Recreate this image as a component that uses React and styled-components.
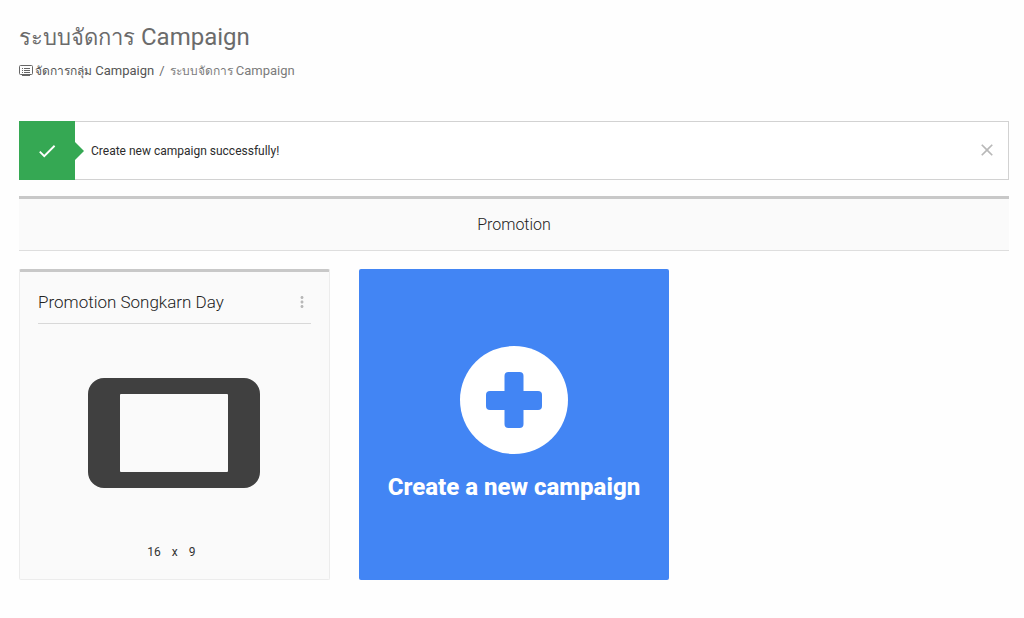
import React from "react"
import styled, { createGlobalStyle } from "styled-components"
import { MdCheck, MdClose, MdMoreVert } from "react-icons/md"

const GlobalStyle = createGlobalStyle`
    * {
        box-sizing: border-box;
    }
    body {
        margin: 0;
        background: #fefefe;
        color: #3c3c3c;
        font-family: Roboto, "Noto Sans", sans-serif;
        font-size: 12px;
    }
    button {
        font-family: inherit;
        border: 0;
        padding: 0;
        background: none;
        cursor: pointer;
    }
`
const Page = styled.main`
    padding: 17px 15px 38px 19px;
`
const Title = styled.h1`
    margin: 0;
    color: #6b6b6b;
    font-size: 24px;
    font-weight: 400;
    line-height: 40px;
`
const Thai = styled.span`
    font-size: ${({ $size }) => $size}px;
`
const Breadcrumb = styled.nav`
    display: flex;
    align-items: center;
    gap: 5px;
    height: 26px;
    margin-bottom: 37px;
    color: #6b6b6b;
    font-size: 13px;
    line-height: 18px;
`
const Crumb = styled.a`
    display: flex;
    align-items: center;
    gap: 2px;
    color: ${({ $current }) => ($current ? "#7b7b7b" : "#555")};
    text-decoration: none;
`
const Alert = styled.div`
    display: flex;
    align-items: stretch;
    height: 59px;
    margin-bottom: 16px;
    border: 1px solid #d2d2d2;
    background: #fff;
`
const AlertIcon = styled.div`
    position: relative;
    display: flex;
    align-items: center;
    justify-content: center;
    width: 56px;
    margin: -1px 0 -1px -1px;
    background: #35a853;
    color: #fff;
    font-size: 22px;

    &::after {
        content: "";
        position: absolute;
        top: 50%;
        left: 100%;
        margin-top: -9px;
        border: 9px solid transparent;
        border-left-color: #35a853;
        border-right-width: 0;
    }
`
const AlertText = styled.p`
    flex: 1;
    align-self: center;
    margin: 0;
    padding-left: 16px;
    color: #2c2c2c;
`
const IconButton = styled.button`
    display: flex;
    align-items: center;
    justify-content: center;
    color: #b8b8b8;
    font-size: ${({ $size }) => $size}px;
`
const CloseButton = styled(IconButton)`
    width: 42px;
    padding-bottom: 2px;
`
const Group = styled.h2`
    margin: 0 0 18px;
    padding: 17px 16px 16px;
    border-top: 3px solid #c8c8c8;
    border-bottom: 1px solid #dedede;
    background: #fafafa;
    color: #222;
    font-size: 16px;
    font-weight: 300;
    line-height: 18px;
    text-align: center;
`
const Cards = styled.section`
    display: grid;
    grid-template-columns: repeat(3, 1fr);
    gap: 29px;
`
const Card = styled.article`
    display: flex;
    flex-direction: column;
    aspect-ratio: 1;
    padding: 0 18px 18px;
    border: 1px solid #ececec;
    border-top: 3px solid #c8c8c8;
    border-radius: 2px;
    background: #fafafa;
`
const CardHeader = styled.header`
    display: flex;
    align-items: center;
    justify-content: space-between;
    height: 52px;
    border-bottom: 1px solid #d8d8d8;
`
const CardTitle = styled.h3`
    margin: 0;
    padding-top: 8px;
    color: #222;
    font-size: 17px;
    font-weight: 300;
`
const MenuButton = styled(IconButton)`
    padding-top: 8px;
`
const Preview = styled.div`
    display: flex;
    flex: 1;
    align-items: center;
    justify-content: center;
`
const Ratio = styled.p`
    display: flex;
    justify-content: center;
    gap: 11px;
    margin: 0;
    padding-right: 6px;
    color: #333;
    line-height: 18px;
`
const CreateCard = styled.button`
    display: flex;
    flex-direction: column;
    align-items: center;
    justify-content: center;
    gap: 17px;
    aspect-ratio: 1;
    border-radius: 2px;
    && {
        background: #4285f4;
    }
    color: #fff;
    font-size: 24px;
    font-weight: 800;
    line-height: 32px;
`

const ScreenIcon = () => (
    <svg width="14" height="13" viewBox="0 0 14 13" fill="none" stroke="#666" aria-hidden="true">
        <rect x="0.5" y="0.5" width="13" height="9" rx="1" />
        <path d="M3 3.500h1M5 3.500h6M3 5.500h1M5 5.500h6M3 7.500h1M5 7.500h6M3 10.500h8" />
    </svg>
)

const DeviceIcon = () => (
    <svg width="172" height="110" viewBox="0 0 172 110" aria-hidden="true">
        <path
            fill="#404040"
            fillRule="evenodd"
            d="M16 0h140a16 16 0 0 1 16 16v78a16 16 0 0 1-16 16H16a16 16 0 0 1-16-16V16A16 16 0 0 1 16 0zM33 16a1 1 0 0 0-1 1v76a1 1 0 0 0 1 1h106a1 1 0 0 0 1-1V17a1 1 0 0 0-1-1z"
        />
    </svg>
)

const PlusIcon = () => (
    <svg width="108" height="108" viewBox="0 0 108 108" aria-hidden="true">
        <circle cx="54" cy="54" r="54" fill="#fff" />
        <rect x="26" y="45" width="56" height="19" rx="4" fill="#4285f4" />
        <rect x="44.500" y="26" width="19" height="56" rx="4" fill="#4285f4" />
    </svg>
)

const CampaignCard = ({ name, width, height }) => {
    return (
        <Card>
            <CardHeader>
                <CardTitle>{name}</CardTitle>
                <MenuButton $size={18} aria-label="Menu">
                    <MdMoreVert />
                </MenuButton>
            </CardHeader>
            <Preview>
                <DeviceIcon />
            </Preview>
            <Ratio>
                <span>{width}</span>
                <span>x</span>
                <span>{height}</span>
            </Ratio>
        </Card>
    )
}

const App = () => {
    return (
        <>
            <GlobalStyle />
            <Page>
                <Title>
                    <Thai $size={22}>ระบบจัดการ</Thai> Campaign
                </Title>
                <Breadcrumb>
                    <Crumb href="#groups">
                        <ScreenIcon />
                        <span>
                            <Thai $size={12}>จัดการกลุ่ม</Thai> Campaign
                        </span>
                    </Crumb>
                    <span>/</span>
                    <Crumb href="#campaigns" $current>
                        <span>
                            <Thai $size={12}>ระบบจัดการ</Thai> Campaign
                        </span>
                    </Crumb>
                </Breadcrumb>
                <Alert role="status">
                    <AlertIcon>
                        <MdCheck />
                    </AlertIcon>
                    <AlertText>Create new campaign successfully!</AlertText>
                    <CloseButton $size={20} aria-label="Close">
                        <MdClose />
                    </CloseButton>
                </Alert>
                <Group>Promotion</Group>
                <Cards>
                    <CampaignCard name="Promotion Songkarn Day" width={16} height={9} />
                    <CreateCard>
                        <PlusIcon />
                        Create a new campaign
                    </CreateCard>
                </Cards>
            </Page>
        </>
    )
}

export default App
